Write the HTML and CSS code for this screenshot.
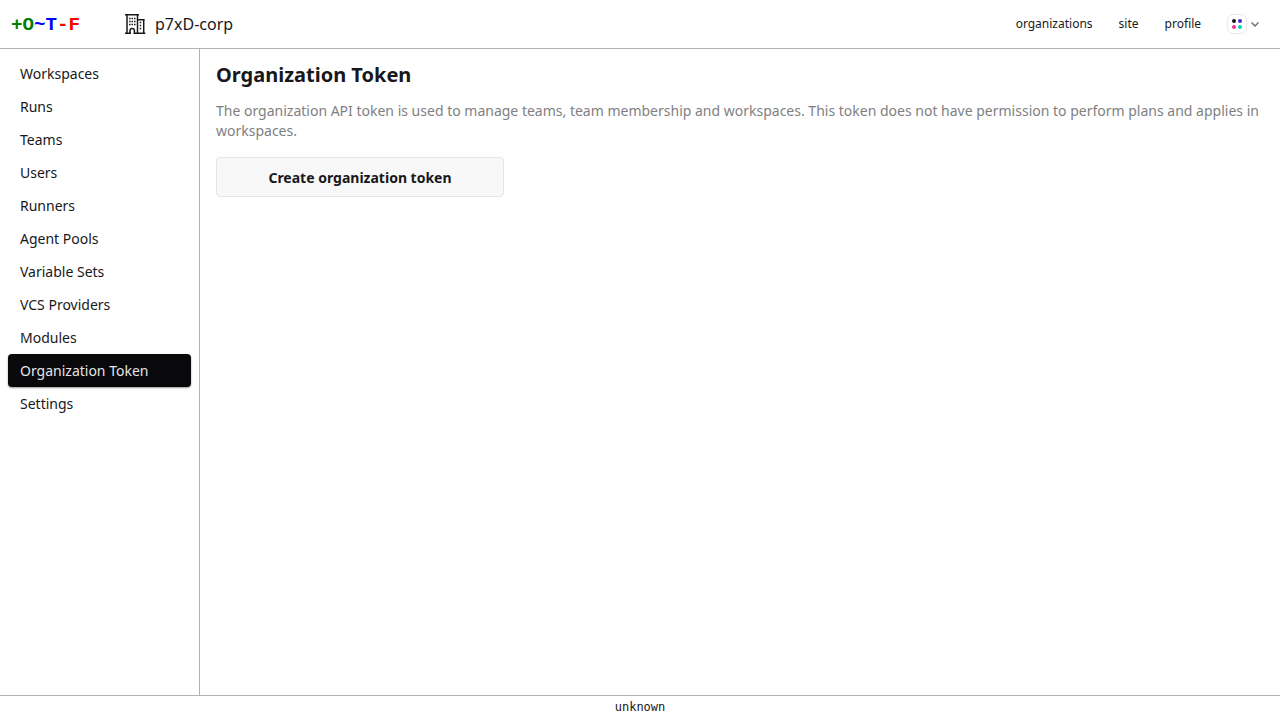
FILE: index.html
```html
<!DOCTYPE html>
<html lang="en">
<head>
<meta charset="utf-8">
<title>Organization Token</title>
<link rel="stylesheet" href="styles.css">
</head>
<body>
<header class="topbar">
  <a class="logo"><span class="green">+O</span><span class="blue">~T</span><span class="red">-F</span></a>
  <div class="org">
    <svg class="org-icon" width="24" height="24" viewBox="0 0 24 24" fill="none" stroke="currentColor" stroke-width="1.5">
      <path d="M4 21V3M14.5 3v18M14.5 7.700H20.700V21M2 2.800H16M14.500 7.700H21.700M2 21.300H8M10.500 21.300H22.300M7 21.500V18.800a2.200 2.200 0 0 1 4.400 0v2.700"/>
      <path stroke-width="1.400" d="M6.100 6.500h1.500M8.500 6.500h1.500M11 6.500h1.500M6.100 9.500h1.500M8.500 9.500h1.500M11 9.500h1.500M6.100 12.500h1.500M8.500 12.500h1.500M11 12.500h1.500M16.700 10.500h1.500M16.700 13.500h1.500M16.700 16.500h1.500"/>
    </svg>
    <span>p7xD-corp</span>
  </div>
  <nav class="links">
    <a>organizations</a>
    <a>site</a>
    <a>profile</a>
    <div class="theme">
      <span class="swatch"><i class="dot base"></i><i class="dot primary"></i><i class="dot secondary"></i><i class="dot accent"></i></span>
      <svg class="chevron" width="8" height="5" viewBox="0 0 8 5" fill="none" stroke="#737374" stroke-width="1.5"><path d="M.5.5 4 4 7.500.5"/></svg>
    </div>
  </nav>
</header>
<div class="body">
  <nav class="sidebar">
    <a class="item">Workspaces</a>
    <a class="item">Runs</a>
    <a class="item">Teams</a>
    <a class="item">Users</a>
    <a class="item">Runners</a>
    <a class="item">Agent Pools</a>
    <a class="item">Variable Sets</a>
    <a class="item">VCS Providers</a>
    <a class="item">Modules</a>
    <a class="item active">Organization Token</a>
    <a class="item">Settings</a>
  </nav>
  <main class="content">
    <h1 class="title">Organization Token</h1>
    <p class="description">The organization API token is used to manage teams, team membership and workspaces. This token does not have permission to perform plans and applies in workspaces.</p>
    <button class="btn">Create organization token</button>
  </main>
</div>
<footer class="footer">unknown</footer>
</body>
</html>
```
FILE: styles.css
```css
* { box-sizing: border-box; }
body {
  margin: 0;
  height: 100vh;
  display: flex;
  flex-direction: column;
  background: #fff;
  color: #18181b;
  font: 14px/20px "Noto Sans", sans-serif;
}
.topbar {
  height: 49px;
  flex: none;
  display: flex;
  align-items: center;
  padding: 0 20px 0 11px;
  border-bottom: 1px solid #b2b2b2;
}
.logo {
  width: 112px;
  padding-top: 2px;
  font: bold 19.2px/28px "Liberation Mono", monospace;
}
.green { color: #008000; }
.blue { color: #00f; }
.red { color: #f00; }
.org {
  display: flex;
  align-items: center;
  gap: 8px;
  font-size: 16px;
  line-height: 24px;
}
.links {
  margin-left: auto;
  display: flex;
  align-items: center;
  gap: 26px;
  padding-right: 1px;
  font-size: 12px;
  line-height: 18px;
}
.theme { display: flex; align-items: center; gap: 4px; }
.swatch {
  width: 20px;
  height: 20px;
  display: grid;
  grid-template-columns: 4px 4px;
  gap: 2px;
  place-content: center;
  border: 1px solid #e8e8e8;
  border-radius: 6px;
}
.chevron { margin-top: 1px; }
.dot { width: 4px; height: 4px; border-radius: 50%; }
.base { background: #18181b; }
.primary { background: #422ad5; }
.secondary { background: #f43098; }
.accent { background: #00d3bb; }
.body { flex: 1; display: flex; min-height: 0; }
.sidebar {
  width: 200px;
  flex: none;
  display: flex;
  flex-direction: column;
  padding: 8px;
  border-right: 1px solid #b2b2b2;
}
.item { padding: 6px 12px; line-height: 21px; border-radius: 4px; }
.active {
  background: #09090b;
  color: #e4e4e7;
  box-shadow: 0 1px 2px rgba(0, 0, 0, .4);
}
.content { flex: 1; padding: 12px 16px; }
.title { margin: 0 0 12px; font-size: 20px; line-height: 28px; font-weight: 700; }
.description { margin: 0 0 16px; color: #7f7f82; }
.btn {
  display: block;
  width: 288px;
  height: 40px;
  padding: 2px 6px 0;
  border: 1px solid #e5e5e5;
  border-radius: 4px;
  background: #f8f8f8;
  color: #18181b;
  font: 700 14px/20px "Noto Sans", sans-serif;
}
.footer {
  height: 25px;
  flex: none;
  border-top: 1px solid #b2b2b2;
  text-align: center;
  font: 12px/22px "DejaVu Sans Mono", monospace;
}
```
